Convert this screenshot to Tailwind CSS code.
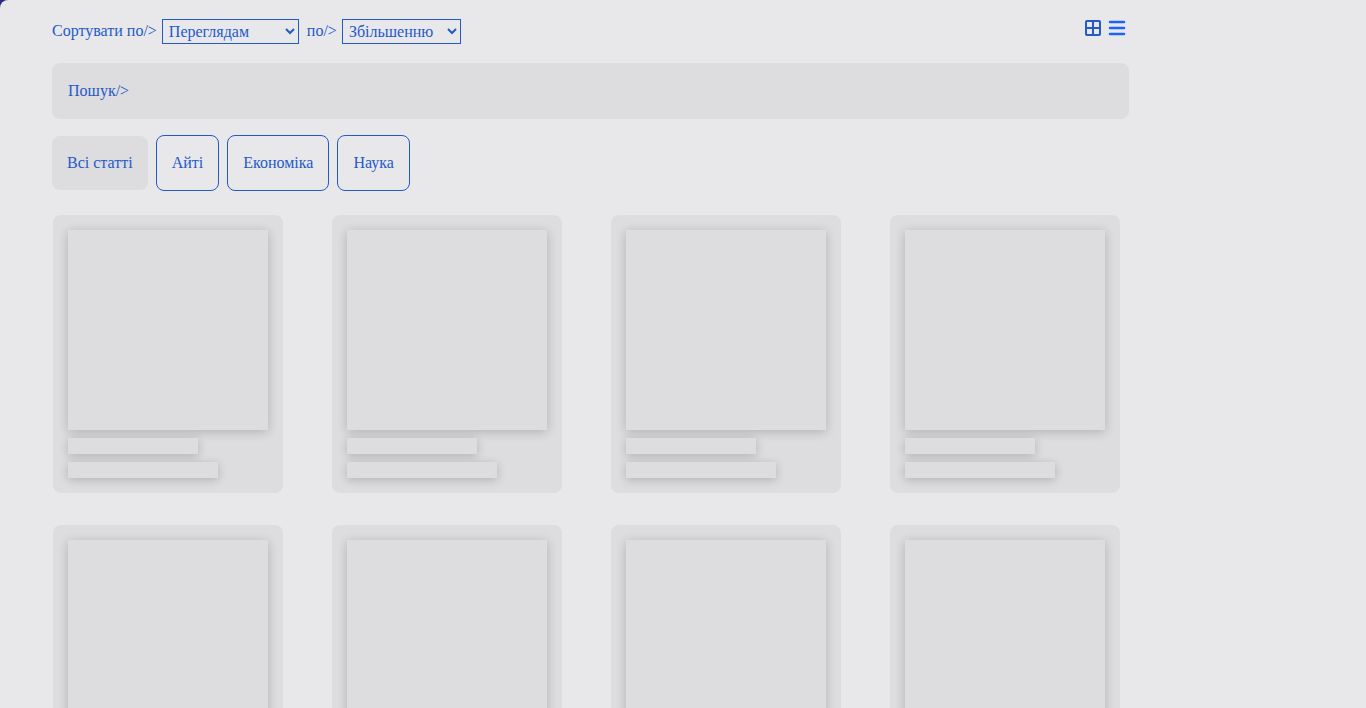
<!DOCTYPE html>
<html lang="uk">
<head>
<meta charset="utf-8">
<meta name="viewport" content="width=device-width, initial-scale=1">
<title>Статті</title>
<script src="https://cdn.jsdelivr.net/npm/@tailwindcss/browser@4"></script>
</head>
<body class="h-screen overflow-hidden bg-[#29297f] font-['Liberation_Serif',serif] text-base text-[#2459c8]">
<main class="h-full overflow-hidden rounded-tl-lg bg-[#e8e8ea] pt-[19px] pr-[237px] pl-[52px]">
  <div class="flex items-start justify-between">
    <div class="flex gap-2">
      <div class="flex items-start gap-[5px]">
        <label for="sort">Сортувати по/&gt;</label>
        <select id="sort" class="h-[25px] w-[137px] border border-[#2459c8] bg-transparent px-0.5">
          <option>Переглядам</option><option>Назві</option><option>Даті</option>
        </select>
      </div>
      <div class="flex items-start gap-[5px]">
        <label for="order">по/&gt;</label>
        <select id="order" class="h-[25px] w-[119px] border border-[#2459c8] bg-transparent px-0.5">
          <option>Збільшенню</option><option>Зменшенню</option>
        </select>
      </div>
    </div>
    <div class="flex pt-px">
      <button type="button" aria-label="Плитка" class="px-1">
        <svg class="block" width="16" height="16" viewBox="0 0 16 16" fill="none" stroke="#2459c8" stroke-width="2"><rect x="1" y="1" width="14" height="14" rx="1"/><path d="M8 1v14M1 8h14"/></svg>
      </button>
      <button type="button" aria-label="Список" class="px-1">
        <svg class="block overflow-visible" width="16" height="16" viewBox="0 0 16 16" fill="none" stroke="#1c63f8" stroke-width="2.6" stroke-linecap="round"><path d="M1 2h14M1 8h14M1 14h14"/></svg>
      </button>
    </div>
  </div>

  <input type="text" aria-label="Пошук" placeholder="Пошук/&gt;" class="mt-[19px] block h-14 w-full rounded-lg bg-[#dddddf] px-4 outline-none placeholder:text-[#2459c8]">

  <div class="mt-4 flex items-center gap-2">
    <button type="button" class="h-[54px] rounded-lg bg-[#dddddf] px-[15px]">Всі статті</button>
    <button type="button" class="h-14 rounded-lg border border-[#2459c8] px-[15px]">Айті</button>
    <button type="button" class="h-14 rounded-lg border border-[#2459c8] px-[15px]">Економіка</button>
    <button type="button" class="h-14 rounded-lg border border-[#2459c8] px-[15px]">Наука</button>
  </div>

  <div id="cards" class="mt-6 grid grid-cols-[repeat(auto-fill,230px)] gap-x-[49px] gap-y-8 pl-px">
  </div>
</main>
<template id="card">
  <article class="flex flex-col gap-2 rounded-lg bg-[#dddddf] p-[15px]">
    <div class="h-[200px] bg-[#dddddf] shadow-[0_2px_10px_0_rgba(0,0,0,0.2)]"></div>
    <div class="h-4 w-[130px] bg-[#dddddf] shadow-[0_2px_10px_0_rgba(0,0,0,0.2)]"></div>
    <div class="h-4 w-[150px] bg-[#dddddf] shadow-[0_2px_10px_0_rgba(0,0,0,0.2)]"></div>
  </article>
</template>
<script>
  const card = document.getElementById('card');
  for (let i = 0; i < 8; i++) document.getElementById('cards').append(card.content.cloneNode(true));
</script>
</body>
</html>
